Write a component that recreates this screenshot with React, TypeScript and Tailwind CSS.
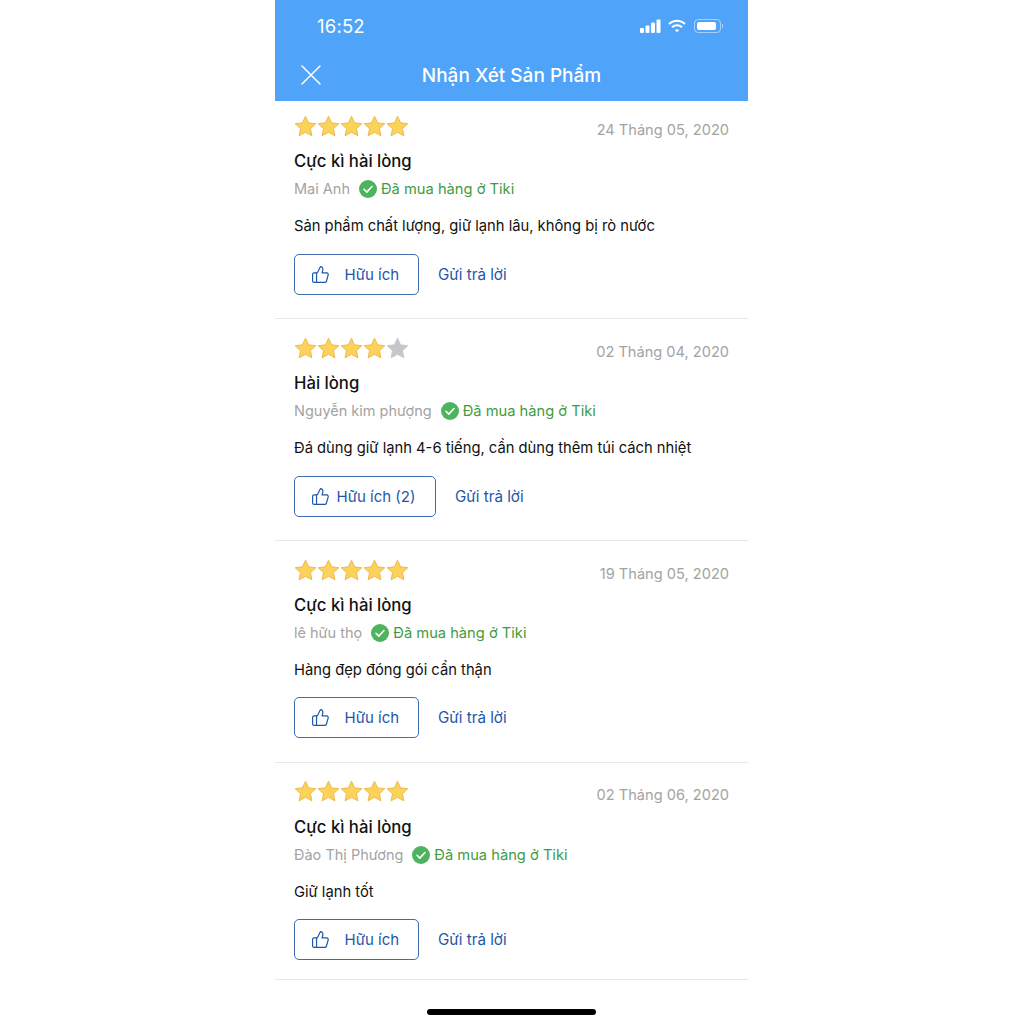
import { ThumbsUp } from "lucide-react";

const FONT = "font-['Inter','Liberation_Sans',sans-serif]";

type Review = {
  stars: number;
  date: string;
  title: string;
  author: string;
  body: string;
  helpful: string;
  wide?: boolean;
  card: string;
  titleGap: string;
  actions: string;
};

const reviews: Review[] = [
  { stars: 5, date: "24 Tháng 05, 2020", title: "Cực kì hài lòng", author: "Mai Anh", body: "Sản phẩm chất lượng, giữ lạnh lâu, không bị rò nước", helpful: "Hữu ích", card: "pt-[13px] pb-[23px]", titleGap: "mt-[11px]", actions: "mt-[16px]" },
  { stars: 4, date: "02 Tháng 04, 2020", title: "Hài lòng", author: "Nguyễn kim phượng", body: "Đá dùng giữ lạnh 4-6 tiếng, cần dùng thêm túi cách nhiệt", helpful: "Hữu ích (2)", wide: true, card: "pt-[17px] pb-[23px]", titleGap: "mt-[11px]", actions: "mt-[16px]" },
  { stars: 5, date: "19 Tháng 05, 2020", title: "Cực kì hài lòng", author: "lê hữu thọ", body: "Hàng đẹp đóng gói cẩn thận", helpful: "Hữu ích", card: "pt-[17px] pb-[24px]", titleGap: "mt-[11px]", actions: "mt-[15px]" },
  { stars: 5, date: "02 Tháng 06, 2020", title: "Cực kì hài lòng", author: "Đào Thị Phương", body: "Giữ lạnh tốt", helpful: "Hữu ích", card: "pt-[16px] pb-[19px]", titleGap: "mt-[12px]", actions: "mt-[15px]" },
];

function Star({ on }: { on: boolean }) {
  return (
    <svg width="23" height="22" viewBox="0 0 24 23" className="shrink-0">
      <path
        d="M12 1.2l3.2 7 7.600.9-5.600 5.200 1.500 7.500L12 18.100l-6.700 3.700 1.500-7.500L1.200 9.100l7.600-.9z"
        fill={on ? "#fbd25a" : "#c7c7c7"}
        stroke={on ? "#efb64a" : "#c7c7c7"}
        strokeWidth="1"
        strokeLinejoin="round"
      />
    </svg>
  );
}

function StatusBar() {
  return (
    <div className="flex h-[50px] items-center justify-between pl-[42px] pr-[25px] pt-[2px] text-white">
      <span className="text-[18.500px] leading-none tracking-[0.2px]">16:52</span>
      <div className="flex items-center gap-[7px]">
        <svg width="21" height="14" viewBox="0 0 21 14" fill="white">
          <rect x="0" y="9" width="4" height="5" rx="1" />
          <rect x="5.500" y="6.500" width="4" height="7.500" rx="1" />
          <rect x="11" y="3.500" width="4" height="10.500" rx="1" />
          <rect x="16.500" y="0.500" width="4" height="13.500" rx="1" />
        </svg>
        <svg width="18" height="14" viewBox="0 0 18 14" fill="none" stroke="white" strokeWidth="2" className="mr-px">
          <path d="M1 5c4.500-4.300 11.500-4.300 16 0" />
          <path d="M4 8.200c2.800-2.600 7.200-2.600 10 0" />
          <path d="M6.700 11c1.300-1.100 3.300-1.100 4.600 0L9 13.300z" fill="white" stroke="none" />
        </svg>
        <div className="flex items-center">
          <div className="flex h-[14px] w-[27px] items-center rounded-[4px] border border-white/50 p-[2px]">
            <div className="h-full w-[19px] rounded-[2px] bg-white" />
          </div>
          <div className="ml-px h-[4px] w-px bg-white/50" />
        </div>
      </div>
    </div>
  );
}

function Header() {
  return (
    <div className="bg-[#4fa3f9]">
      <StatusBar />
      <div className="relative flex h-[51px] items-center justify-center text-white">
        <svg width="20" height="20" viewBox="0 0 20 20" className="absolute left-[26px] top-[15px]" stroke="white" strokeWidth="1.500" strokeLinecap="round">
          <path d="M1 1l18 18M19 1L1 19" />
        </svg>
        <span className="text-[19px] font-medium leading-none">Nhận Xét Sản Phẩm</span>
      </div>
    </div>
  );
}

function ReviewCard({ r }: { r: Review }) {
  return (
    <div className={`border-b border-[#e8e8e8] px-[19px] ${r.card}`}>
      <div className="flex h-[24px] items-center justify-between">
        <div className="flex">
          {[1, 2, 3, 4, 5].map((n) => (
            <Star key={n} on={n <= r.stars} />
          ))}
        </div>
        <span className="mt-[10px] text-[14.600px] text-[#a3a3a3]">{r.date}</span>
      </div>
      <div className={`${r.titleGap} text-[16.700px] font-medium leading-[24px] text-[#111]`}>{r.title}</div>
      <div className="mt-[4px] flex h-[24px] items-center text-[14.500px]">
        <span className="text-[#a3a3a3]">{r.author}</span>
        <svg width="18" height="18" viewBox="0 0 18 18" className="ml-[9px]">
          <circle cx="9" cy="9" r="9" fill="#4cb45c" />
          <path d="M5 9.300l2.800 2.800L13 6.500" fill="none" stroke="white" strokeWidth="1.600" strokeLinecap="round" strokeLinejoin="round" />
        </svg>
        <span className="ml-[4px] text-[14.700px] text-[#3f9c3f]">Đã mua hàng ở Tiki</span>
      </div>
      <p className="mt-[13px] text-[14.750px] leading-[24px] text-[#111]">{r.body}</p>
      <div className={`${r.actions} flex items-center`}>
        <button className={`flex h-[41px] items-center rounded-[5px] border-[1.500px] border-[#3d6cb0] text-[15px] text-[#1f57a8] ${r.wide ? "w-[142px] pl-[15.500px]" : "w-[125px] pl-[15.500px]"}`}>
          <ThumbsUp size={19} strokeWidth={1.5} className="shrink-0" />
          <span className={`mt-px ${r.wide ? "ml-[7px]" : "ml-[15px]"}`}>{r.helpful}</span>
        </button>
        <span className="ml-[19px] mt-[2px] text-[15.200px] text-[#1f57a8]">Gửi trả lời</span>
      </div>
    </div>
  );
}

export default function App() {
  return (
    <div className={`${FONT} flex min-h-[1024px] justify-center bg-white pr-px`}>
      <div className="relative h-[1024px] w-[473px]">
        <Header />
        {reviews.map((r) => (
          <ReviewCard key={r.date} r={r} />
        ))}
        <div className="absolute bottom-[9px] left-[152px] h-[6px] w-[169px] rounded-full bg-black" />
      </div>
    </div>
  );
}
